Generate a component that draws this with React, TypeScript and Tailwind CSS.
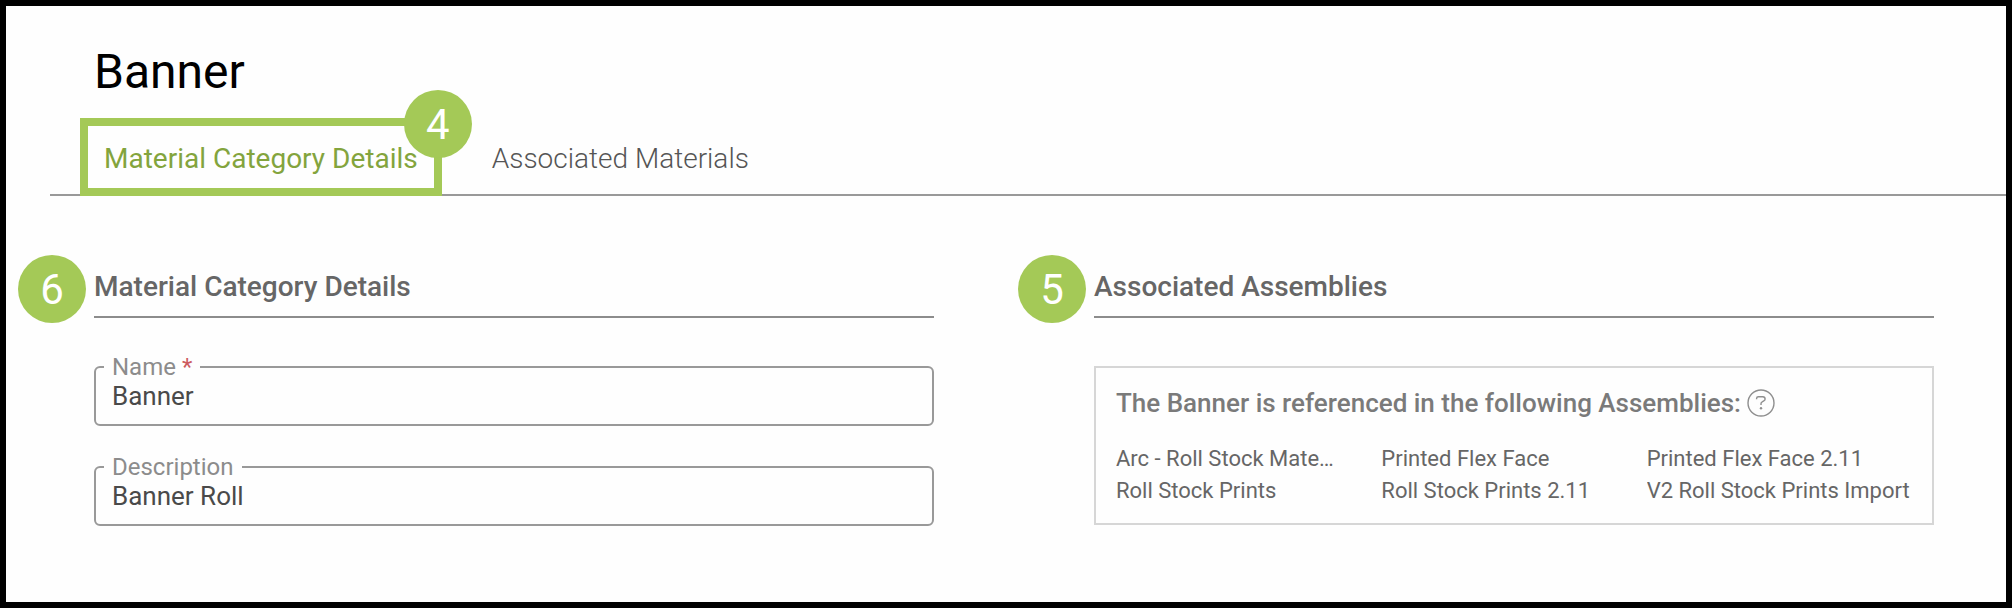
import { useState } from "react";
import type { ReactNode } from "react";

const TABS = ["Material Category Details", "Associated Materials"];

const ASSEMBLIES = [
  "Arc - Roll Stock Mate…",
  "Printed Flex Face",
  "Printed Flex Face 2.11",
  "Roll Stock Prints",
  "Roll Stock Prints 2.11",
  "V2 Roll Stock Prints Import",
];

function StepBadge({ step, className }: { step: number; className: string }) {
  return (
    <span
      className={`absolute flex size-[68px] items-center justify-center rounded-full bg-[#a4c957] pt-0.5 text-[42px] leading-[48px] text-white ${className}`}
    >
      {step}
    </span>
  );
}

function Section({
  title,
  step,
  children,
}: {
  title: string;
  step: number;
  children: ReactNode;
}) {
  return (
    <section className="min-w-0">
      <div className="relative border-b-2 border-[#8c8c8c] pb-[9px]">
        <StepBadge step={step} className="-top-3 right-full mr-2" />
        <h2 className="text-[28px] leading-[40px] font-medium text-[#666666]">{title}</h2>
      </div>
      {children}
    </section>
  );
}

function Field({
  id,
  label,
  required,
  defaultValue,
}: {
  id: string;
  label: string;
  required?: boolean;
  defaultValue: string;
}) {
  return (
    <fieldset className="min-w-0 rounded-md border-2 border-[#999999] px-2 pb-3">
      <legend className="px-2 text-[24px] leading-[26px] text-[#8c8c8c]">
        <label htmlFor={id}>
          {label}
          {required && <span className="text-[#cc5a5f]"> *</span>}
        </label>
      </legend>
      <input
        id={id}
        defaultValue={defaultValue}
        className="block h-8 w-full bg-transparent px-2 text-[26px] leading-[32px] text-[#4a4a4a] outline-none"
      />
    </fieldset>
  );
}

function HelpIcon() {
  return (
    <svg viewBox="0 0 28 28" className="size-7" fill="none" stroke="#8f8f8f" aria-hidden="true">
      <circle cx="14" cy="14" r="13" strokeWidth="1.4" />
      <path d="M9.6 10.2V9.4c0-1 .8-1.7 1.8-1.7h4.4c1.3 0 2.3 1 2.3 2.2 0 .9-.5 1.6-1.3 2l-1.6.9c-.8.4-1.2 1-1.2 1.9v1.2" strokeWidth="1.4" />
      <circle cx="14" cy="19.2" r="1.2" fill="#8f8f8f" stroke="none" />
    </svg>
  );
}

export default function App() {
  const [active, setActive] = useState(TABS[0]);

  return (
    <div className="min-h-screen border-6 border-black bg-[#fefefe] font-[Roboto,sans-serif]">
      <header className="pt-[34px] pl-[44px]">
        <h1 className="pl-[44px] text-[48px] leading-[64px] text-black">Banner</h1>
        <div
          role="tablist"
          className="mt-[14px] flex gap-[26px] border-b-2 border-[#999999] pl-[30px]"
        >
          {TABS.map((tab) => (
            <div key={tab} className="relative -mb-0.5">
              <button
                type="button"
                role="tab"
                aria-selected={tab === active}
                onClick={() => setActive(tab)}
                className={`h-[78px] border-8 px-4 pt-1 text-[28px] leading-[40px] whitespace-nowrap ${
                  tab === active
                    ? "border-[#a4c957] text-[#83a43d]"
                    : "border-transparent font-light text-[#555555]"
                }`}
              >
                {tab}
              </button>
              {tab === active && <StepBadge step={4} className="-top-7 -right-[30px]" />}
            </div>
          ))}
        </div>
      </header>

      <main className="mt-[71px] grid grid-cols-2 gap-[160px] pr-[72px] pl-[88px]">
        <Section title="Material Category Details" step={6}>
          <form className="mt-9 flex flex-col gap-7">
            <Field id="name" label="Name" required defaultValue="Banner" />
            <Field id="description" label="Description" defaultValue="Banner Roll" />
          </form>
        </Section>

        <Section title="Associated Assemblies" step={5}>
          <div className="mt-12 border-2 border-[#d6d6d6] px-5 py-4">
            <div className="flex items-center gap-1.5 pt-px">
              <h3 className="text-[26px] leading-[36px] font-medium text-[#7a7a7a]">
                The Banner is referenced in the following Assemblies:
              </h3>
              <button type="button" aria-label="Help">
                <HelpIcon />
              </button>
            </div>
            <ul className="mt-[22px] grid grid-cols-3 text-[22px] leading-[32px] text-[#666666]">
              {ASSEMBLIES.map((name) => (
                <li key={name} className="truncate">
                  {name}
                </li>
              ))}
            </ul>
          </div>
        </Section>
      </main>
    </div>
  );
}
